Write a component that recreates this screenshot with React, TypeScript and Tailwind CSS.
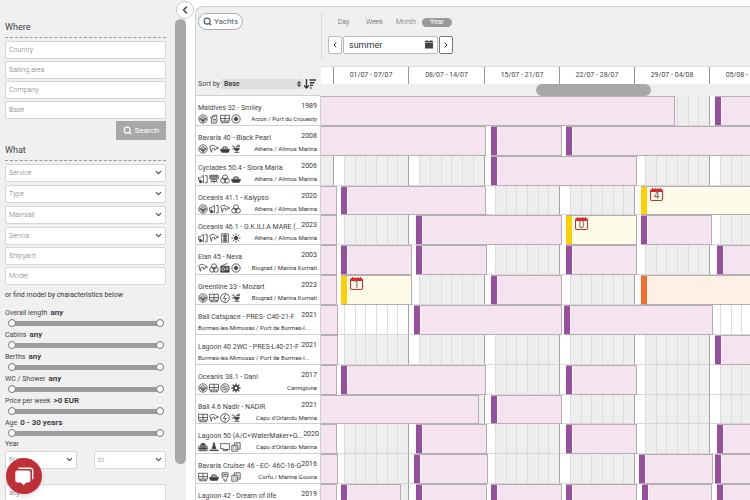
import React from "react";
import { ChevronDown, ChevronLeft, ChevronRight, Search } from "lucide-react";

type Kind = "booked" | "option" | "offer";
type Bar = { from: number; to: number; kind?: Kind; open?: boolean; count?: number };
type IconName =
  | "wheel" | "glove" | "plotter" | "disc" | "dolphin" | "dinghy" | "outboard" | "speaker" | "grill"
  | "trefoil" | "panel" | "sun" | "radio" | "bolt" | "coin" | "gear" | "bag" | "mast" | "screen" | "boxes" | "toilet";
type Yacht = { name: string; year: number; base: string; icons: IconName[]; bars: Bar[]; free?: boolean };

const END = 432;

const yachts: Yacht[] = [
  { name: "Maldives 32 - Smiley", year: 1989, base: "Arzon / Port du Crouesty", icons: ["wheel", "glove", "plotter", "disc"],
    bars: [{ from: 0, to: 354, open: true }, { from: 394, to: END }] },
  { name: "Bavaria 40 - Black Pearl", year: 2008, base: "Athens / Alimos Marina", icons: ["wheel", "dolphin", "dinghy", "outboard"],
    bars: [{ from: 0, to: 165, open: true }, { from: 170, to: 241 }, { from: 245, to: END }] },
  { name: "Cyclades 50.4 - Siora Maria", year: 2006, base: "Athens / Alimos Marina", icons: ["speaker", "grill", "trefoil", "dinghy"],
    bars: [{ from: 170, to: 316 }] },
  { name: "Oceanis 41.1 - Kalypso", year: 2020, base: "Athens / Alimos Marina", icons: ["wheel", "speaker", "dolphin", "trefoil"],
    bars: [{ from: 0, to: 16, open: true }, { from: 20, to: 165 }, { from: 320, to: END, kind: "option", count: 4 }] },
  { name: "Oceanis 46.1 - G.K.ILI.A MARE (...", year: 2023, base: "Athens / Alimos Marina", icons: ["speaker", "dolphin", "panel", "sun"],
    bars: [{ from: 0, to: 16, open: true }, { from: 95, to: 241 }, { from: 245, to: 316, kind: "option", count: 0 }, { from: 320, to: 391 }] },
  { name: "Elan 45 - Neva", year: 2003, base: "Biograd / Marina Kornati", icons: ["dolphin", "trefoil", "radio", "disc"],
    bars: [{ from: 0, to: 16, open: true }, { from: 20, to: 91 }, { from: 95, to: 166 }, { from: 245, to: 316 }, { from: 396, to: END }] },
  { name: "Greenline 33 - Mozart", year: 2023, base: "Biograd / Marina Kornati", icons: ["wheel", "plotter", "bolt", "outboard"],
    bars: [{ from: 0, to: 16, open: true }, { from: 20, to: 91, kind: "option", count: 1 }, { from: 170, to: 241 }, { from: 320, to: END, kind: "offer" }] },
  { name: "Bali Catspace - PRES- C40-21-F", year: 2021, base: "Bormes-les-Mimosas / Port de Bormes-l...", icons: [], free: true,
    bars: [{ from: 0, to: 17, open: true }, { from: 93, to: 241 }, { from: 243, to: 392 }] },
  { name: "Lagoon 40 2WC - PRES-L40-21-F", year: 2021, base: "Bormes-les-Mimosas / Port de Bormes-l...", icons: [],
    bars: [{ from: 0, to: 17, open: true }, { from: 394, to: END }] },
  { name: "Oceanis 38.1 - Dani", year: 2017, base: "Cannigione", icons: ["wheel", "plotter", "coin", "gear"],
    bars: [{ from: 0, to: 16, open: true }, { from: 20, to: 165 }, { from: 245, to: 316 }] },
  { name: "Bali 4.6 Nadir - NADIR", year: 2021, base: "Capo d'Orlando Marina", icons: ["plotter", "dolphin", "bolt", "outboard"],
    bars: [{ from: 0, to: 158, open: true }, { from: 170, to: 241 }] },
  { name: "Lagoon 50 (A/C+WaterMaker+G...", year: 2020, base: "Capo d'Orlando Marina", icons: ["bag", "mast", "screen", "boxes"],
    bars: [{ from: 0, to: 16, open: true }, { from: 95, to: 166 }, { from: 245, to: 316 }, { from: 396, to: END }] },
  { name: "Bavaria Cruiser 46 - EC- 46C-16-G", year: 2016, base: "Corfu / Marina Gouvia", icons: ["plotter", "dinghy", "toilet", "boxes"],
    bars: [{ from: 0, to: 17, open: true }, { from: 93, to: 167 }, { from: 318, to: 392 }, { from: 394, to: END }] },
  { name: "Lagoon 42 - Dream of life", year: 2019, base: "Corfu / Marina Gouvia", icons: ["wheel", "plotter", "dinghy", "boxes"],
    bars: [{ from: 0, to: 16, open: true }, { from: 20, to: 80 }, { from: 95, to: 166 }, { from: 170, to: 241 }, { from: 245, to: 316 }, { from: 321, to: 391 }, { from: 396, to: END }] },
];

const weeks = [
  { label: "01/07 - 07/07", width: "w-[75px]" },
  { label: "08/07 - 14/07", width: "w-[76px]" },
  { label: "15/07 - 21/07", width: "w-[75px]" },
  { label: "22/07 - 28/07", width: "w-[75px]" },
  { label: "29/07 - 04/08", width: "w-[75px]" },
  { label: "05/08 - 11/08", width: "w-[75px]" },
];

const glyphs: Record<IconName, React.ReactNode> = {
  wheel: (<><circle cx="12" cy="12" r="10" /><circle cx="12" cy="12" r="5.5" /><path d="M3 12h18M12 12v9M8 15h8" /></>),
  glove: <path d="M6 22V12l-2-4 3-1 2 3V4l3-2 1 5 3-5 3 2-1 6 2 3-3 9zM9 13h8M9 17h7" />,
  plotter: <path d="M1 3h22v14H1zM12 3v14M1 11h22M5 17v4M19 17v4M3 21h18" />,
  disc: (<><circle cx="12" cy="12" r="10" /><circle cx="12" cy="12" r="3.5" fill="currentColor" /><path d="M12 5v3M12 16v3M5 12h3M16 12h3M7 7l2 2M17 7l-2 2M7 17l2-2M17 17l-2-2" strokeWidth="1.2" /></>),
  dolphin: <path d="M1 7c5-5 12-5 16 0l6 3-5 1c-1 3-3 4-5 4l1-4c-3-2-6-1-7 2-1 2 0 5-1 7-1-3-3-5-2-8 0-2-1-3-3-5z" />,
  dinghy: (<><path d="M1 13h22l-3 7H4z" fill="currentColor" /><path d="M5 12l3-5h8l3 5M9 7v5M14 7v5" /></>),
  outboard: (<><path d="M8 10h12l-2 5H10z" fill="currentColor" /><path d="M2 5h5l2 6M2 12h6M14 15v6M8 20h12M12 6h9M15 3h7" /></>),
  speaker: (<><path d="M1 9h5l7-6v18l-7-6H1z" /><path d="M4 15v6h4v-5" fill="currentColor" /><path d="M17 4h5v17h-5" /></>),
  grill: <path d="M2 3h20v9H2zM2 7h20M7 3v9M12 3v19M17 3v9M8 12l-4 9M16 12l4 9M7 18h10" />,
  trefoil: (<><circle cx="12" cy="8" r="6" /><circle cx="7.500" cy="16" r="6" /><circle cx="16.500" cy="16" r="6" /></>),
  panel: <path d="M4 2h16v20H4zM7 6h10M7 9h10M7 12h10M7 15h10M7 18h10M12 2v20" />,
  sun: (<><circle cx="12" cy="12" r="4" fill="currentColor" /><path d="M12 1v5M12 18v5M1 12h5M18 12h5M4 4l4 4M16 16l4 4M20 4l-4 4M8 16l-4 4" /></>),
  radio: (<><path d="M2 8h20v14H2z" fill="currentColor" /><path d="M3 7L18 1" /><circle cx="8" cy="15" r="3.5" stroke="white" /><path d="M14 12h6M14 16h6" stroke="white" /></>),
  bolt: (<><circle cx="12" cy="12" r="10.5" /><path d="M14 4l-6 9h7l-5 7" /></>),
  coin: (<><circle cx="12" cy="12" r="10" /><path d="M6 8c4-4 8 4 12 0M5 12c4-4 9 4 14 0M6 16c4-4 8 4 12 0" /></>),
  gear: (<><circle cx="12" cy="12" r="5" strokeWidth="4" /><path d="M12 1v4M12 19v4M1 12h4M19 12h4M4 4l3 3M17 17l3 3M20 4l-3 3M7 17l-3 3" strokeWidth="3" /></>),
  bag: (<><path d="M2 10h20v11H2z" /><path d="M7 9c0-7 10-7 10 0M7 10v11M12 5v16M17 10v11M2 15h20" strokeWidth="3" /></>),
  mast: (<><path d="M11 2h2l1 7 3 7H7l3-7z" fill="currentColor" /><path d="M1 20h22" strokeWidth="3" /></>),
  screen: <path d="M1 4h22v14H8M1 4v12h7v5h10v-3" />,
  boxes: <path d="M2 8h13v14H2zM8 8V2h14v15h-7M5 12h3M10 12h3M5 17h3M10 17h3M13 5h3M18 9h2M18 13h2" />,
  toilet: <path d="M5 2h14v8H5zM5 10c0 5 3 6 5 7v5h5v-5c2-1 4-3 4-7M8 6h8" />,
};

function Glyph({ name }: { name: IconName }) {
  return (
    <svg viewBox="0 0 24 24" className="size-[10px] shrink-0 text-[#3c3c3c]" fill="none" stroke="currentColor" strokeWidth="1.9" aria-hidden="true">
      {glyphs[name]}
    </svg>
  );
}

const field =
  "block h-[18px] w-full rounded-[2px] border border-[#d6d6d6] bg-white px-[3px] text-[7px] font-light text-[#555] placeholder:text-[#777] outline-none";

function TextField({ label }: { label: string }) {
  return <input type="text" aria-label={label} placeholder={label} className={field} />;
}

function SelectField({ label }: { label: string }) {
  return (
    <div className="relative flex-1">
      <select aria-label={label} className={`${field} appearance-none text-[#777]`}>
        <option>{label}</option>
      </select>
      <ChevronDown className="pointer-events-none absolute top-[4px] right-[3px] size-[9px] text-[#444]" strokeWidth={3} />
    </div>
  );
}

function Heading({ children }: { children: React.ReactNode }) {
  return <h2 className="mb-[3px] border-b border-dashed border-[#999] pb-[3px] text-[9px] leading-[14px] text-[#444]">{children}</h2>;
}

const knob =
  "pointer-events-none h-[8px] w-full appearance-none bg-transparent [grid-area:1/1] [&::-webkit-slider-thumb]:pointer-events-auto [&::-webkit-slider-thumb]:size-[8px] [&::-webkit-slider-thumb]:appearance-none [&::-webkit-slider-thumb]:rounded-full [&::-webkit-slider-thumb]:border [&::-webkit-slider-thumb]:border-[#777] [&::-webkit-slider-thumb]:bg-white";

function RangeField({ label, value }: { label: string; value: string }) {
  return (
    <div>
      <div className="flex gap-[3px] text-[7px] leading-[12px] text-[#444]">
        {label} <b className="text-[8px] font-semibold text-[#333]">{value}</b>
      </div>
      <div className="mr-[2px] ml-[3px] grid items-center">
        <div className="mx-[4px] h-[5px] bg-[#9b9b9b] [grid-area:1/1]" />
        <input type="range" aria-label={`${label} from`} defaultValue={0} className={knob} />
        <input type="range" aria-label={`${label} to`} defaultValue={100} className={knob} />
      </div>
    </div>
  );
}

function Sidebar() {
  return (
    <aside className="relative flex w-[186px] shrink-0 bg-[#f0f0f0]">
      <form className="h-full min-w-0 flex-1 overflow-hidden pt-[20px] pr-[9px] pl-[5px]">
        <Heading>Where</Heading>
        <div className="flex flex-col gap-[2px]">
          <TextField label="Country" />
          <TextField label="Sailing area" />
          <TextField label="Company" />
          <TextField label="Base" />
          <button type="button" className="flex h-[19px] w-[50px] items-center justify-center gap-[3px] self-end bg-[#a8a8a8] text-[8px] text-white">
            <Search className="size-[9px]" strokeWidth={3} />
            Search
          </button>
        </div>
        <div className="mt-[3px]">
          <Heading>What</Heading>
        </div>
        <div className="flex flex-col gap-[3px]">
          <SelectField label="Service" />
          <SelectField label="Type" />
          <SelectField label="Mainsail" />
          <SelectField label="Genoa" />
        </div>
        <div className="mt-[2px] flex flex-col gap-[2px]">
          <TextField label="Shipyard" />
          <TextField label="Model" />
        </div>
        <p className="mt-[4px] mb-[6px] text-[7px] leading-[12px] text-[#333]">or find model by characteristics below</p>
        <div className="flex flex-col gap-[2px]">
          <RangeField label="Overall length" value="any" />
          <RangeField label="Cabins" value="any" />
          <RangeField label="Berths" value="any" />
          <RangeField label="WC / Shower" value="any" />
          <RangeField label="Price per week" value=">0 EUR" />
          <RangeField label="Age" value="0 - 30 years" />
        </div>
        <div className="text-[7px] leading-[14px] text-[#444]">Year</div>
        <div className="flex gap-[17px]">
          <SelectField label="From" />
          <SelectField label="to" />
        </div>
        <div className="mt-[15px]">
          <TextField label="any" />
        </div>
      </form>
      <div className="w-[11px] pt-[19px] pb-[36px]">
        <div className="h-full rounded-full bg-[#a8a8a8]" />
      </div>
      <button type="button" aria-label="Collapse filters" className="absolute top-[1px] right-[-8px] z-10 flex size-[18px] items-center justify-center rounded-full border border-[#ccc] bg-white">
        <ChevronLeft className="size-[12px] text-[#444]" strokeWidth={3} />
      </button>
      <button type="button" aria-label="Open chat" className="absolute bottom-[6px] left-[6px] z-10 flex size-[36px] items-center justify-center rounded-full bg-[#bf2f38] shadow-md">
        <svg viewBox="0 0 24 24" className="size-[22px]" aria-hidden="true">
          <path d="M6 3.500h13q2.500 0 2.500 2.500v9.500" fill="none" stroke="white" strokeWidth="1.5" />
          <path d="M4.500 6h12.500q2 0 2 2v9q0 2-2 2h-2.500l-3 3-3-3H4.500q-2 0-2-2V8q0-2 2-2z" fill="white" />
        </svg>
      </button>
    </aside>
  );
}

function CountBadge({ count }: { count: number }) {
  return (
    <span className="relative mt-[2px] ml-[2px] flex h-[12px] w-[13px] items-end justify-center rounded-[2px] border border-t-3 border-[#e0262e] text-[10px] leading-[9px] text-[#666]">
      <svg viewBox="0 0 13 3" className="absolute top-[-4px] left-[-1px] h-[3px] w-[13px]" aria-hidden="true">
        <path d="M2.500 0v3M5 0v3M8 0v3M10.500 0v3" stroke="#e0262e" strokeWidth="1" />
      </svg>
      {count}
    </span>
  );
}

const fills: Record<Kind, string> = { booked: "bg-[#f5e4ef]", option: "bg-[#fefce8]", offer: "bg-[#fef0e6]" };
const markers: Record<Kind, string> = { booked: "bg-[#984f9f]", option: "bg-[#ffd000]", offer: "bg-[#f76b26]" };

function Timeline({ bars, free }: { bars: Bar[]; free?: boolean }) {
  const day = free ? "bg-white" : "bg-[#eeeeee]";
  return (
    <div className="grid min-w-0 flex-1 overflow-hidden">
      <div className="flex [grid-area:1/1]">
        <div className={`w-[12px] shrink-0 border-b border-b-[#d8d8d8] ${day}`} />
        {weeks.map((week) => (
          <div key={week.label} className={`flex shrink-0 border-b border-l border-b-[#d8d8d8] border-l-[#a3a3a3] ${week.width}`}>
            <div className="w-[10px] shrink-0 bg-white" />
            {[1, 2, 3, 4, 5, 6].map((n) => (
              <div key={n} className={`flex-1 border-l border-[#dcdcdc] ${day}`} />
            ))}
          </div>
        ))}
      </div>
      <div className="z-[1] flex [grid-area:1/1]">
        {bars.map((bar, i) => {
          const kind = bar.kind ?? "booked";
          const gap = bar.from - (i ? bars[i - 1].to : 0);
          return (
            <React.Fragment key={bar.from}>
              <div className={i && gap < 6 ? "shrink-0 bg-white" : "shrink-0"} style={{ width: gap }} />
              <div className={`flex shrink-0 border border-l-0 border-[#b3aeb2] ${fills[kind]}`} style={{ width: bar.to - bar.from }}>
                {!bar.open && <div className={`w-[7px] border-r border-white ${markers[kind]}`} />}
                {bar.count !== undefined && <CountBadge count={bar.count} />}
              </div>
            </React.Fragment>
          );
        })}
      </div>
    </div>
  );
}

function YachtRow({ yacht }: { yacht: Yacht }) {
  return (
    <li className="flex min-h-0">
      <div className="flex w-[125px] shrink-0 flex-col border-r border-b border-[#d0d0d0] bg-white pt-[5px] pr-[3px] pl-[2px] text-[#333]">
        <div className="flex justify-between text-[7px] whitespace-nowrap">
          <a href="#yacht" className="pt-[1px] leading-[12px] text-[#444]">{yacht.name}</a>
          <span className="leading-[10px]">{yacht.year}</span>
        </div>
        <div className="flex items-center justify-between">
          {yacht.icons.length > 0 && (
            <div className="flex gap-[1px]">
              {yacht.icons.map((name) => <Glyph key={name} name={name} />)}
            </div>
          )}
          <span className="text-[6px] leading-[10px] whitespace-nowrap">{yacht.base}</span>
        </div>
      </div>
      <Timeline bars={yacht.bars} free={yacht.free} />
    </li>
  );
}

function PlannerHeader() {
  return (
    <header className="flex h-[89px]">
      <div className="flex w-[125px] shrink-0 flex-col justify-between border-b border-[#d0d0d0] pt-[6px] pb-[6px] pl-[2px]">
        <button type="button" className="flex h-[17px] w-[45px] items-center justify-center gap-[2px] rounded-full border border-[#aaa] bg-white text-[8px] text-[#4d5f6b]">
          <Search className="size-[9px]" strokeWidth={3} />
          Yachts
        </button>
        <div className="flex items-center text-[7px] text-[#444]">
          <label htmlFor="sort">Sort by</label>
          <div className="relative ml-[1px] w-[82px]">
            <select id="sort" className="block h-[10px] w-full appearance-none bg-[#dedede] px-[3px] text-[7px] leading-[10px] font-medium text-[#333]">
              <option>Base</option>
            </select>
            <svg viewBox="0 0 4 8" className="pointer-events-none absolute top-[1px] right-[2px] h-[8px] w-[4px]" aria-hidden="true">
              <path d="M2 1l2 2.500H0zM2 7L0 4.500h4z" fill="#333" />
            </svg>
          </div>
          <button type="button" aria-label="Sort direction" className="ml-[1px]">
            <svg viewBox="0 0 12 10" className="h-[10px] w-[12px]" fill="none" stroke="#333" strokeWidth="1.4" aria-hidden="true">
              <path d="M2.500 0v9M0 6.500l2.500 2.500L5 6.500M5.500 1H12M6 3.700h4.500M6 6.300h3M6 9h1.500" />
            </svg>
          </button>
        </div>
      </div>
      <div className="flex min-w-0 flex-1 flex-col">
        <div className="flex h-[59px] pt-[6px]">
          <div className="h-[47px] border-l border-[#d6d6d6]" />
          <div className="flex flex-col gap-[9px] pt-[5px] pl-[6px]">
            <nav className="flex h-[9px] items-center text-[7px] leading-[9px] font-light text-[#555]">
              <button type="button" className="w-[31px]">Day</button>
              <button type="button" className="w-[31px]">Week</button>
              <button type="button" className="w-[32px]">Month</button>
              <button type="button" className="h-[9px] w-[30px] rounded-full bg-[#999] font-normal text-white">Year</button>
            </nav>
            <div className="flex h-[18px] gap-[1px]">
              <button type="button" aria-label="Previous" className="flex w-[14px] items-center justify-center rounded-[2px] border border-[#bbb] bg-white">
                <ChevronLeft className="size-[8px] text-[#333]" strokeWidth={3} />
              </button>
              <div className="relative">
                <input type="text" aria-label="Period" defaultValue="summer" className="block h-[18px] w-[95px] rounded-[2px] border border-[#bbb] bg-white px-[5px] text-[9px] text-[#333]" />
                <svg viewBox="0 0 8 9" className="absolute top-[4px] right-[5px] h-[9px] w-[8px]" fill="#444" aria-hidden="true">
                  <path d="M0 1h8v1.500H0zM0 3h8v5.500H0zM1.500 0h1v1.500h-1zM5.500 0h1v1.500h-1z" />
                </svg>
              </div>
              <button type="button" aria-label="Next" className="flex w-[14px] items-center justify-center rounded-[2px] border border-[#777] bg-white">
                <ChevronRight className="size-[8px] text-[#333]" strokeWidth={3} />
              </button>
            </div>
          </div>
        </div>
        <div className="flex h-[18px] overflow-hidden border-t border-[#dcdcdc] bg-white text-[7px] text-[#444]">
          <div className="w-[12px] shrink-0" />
          {weeks.map((week) => (
            <div key={week.label} className={`flex shrink-0 items-center justify-center border-l border-[#999] ${week.width}`}>{week.label}</div>
          ))}
        </div>
        <div className="h-[12px] pl-[215px]">
          <div className="h-[12px] w-[115px] rounded-full bg-[#a8a8a8]" />
        </div>
      </div>
    </header>
  );
}

export default function App() {
  return (
    <div className="flex h-screen overflow-hidden bg-white font-['Roboto','Noto_Sans',sans-serif]">
      <Sidebar />
      <main className="mt-[6px] ml-[9px] min-w-0 flex-1 overflow-hidden rounded-tl-[8px] border-t border-l border-[#d0d0d0] bg-[#efefef]">
        <PlannerHeader />
        <ul className="grid h-[418px] auto-rows-fr bg-white">
          {yachts.map((yacht) => <YachtRow key={yacht.name} yacht={yacht} />)}
        </ul>
      </main>
    </div>
  );
}
